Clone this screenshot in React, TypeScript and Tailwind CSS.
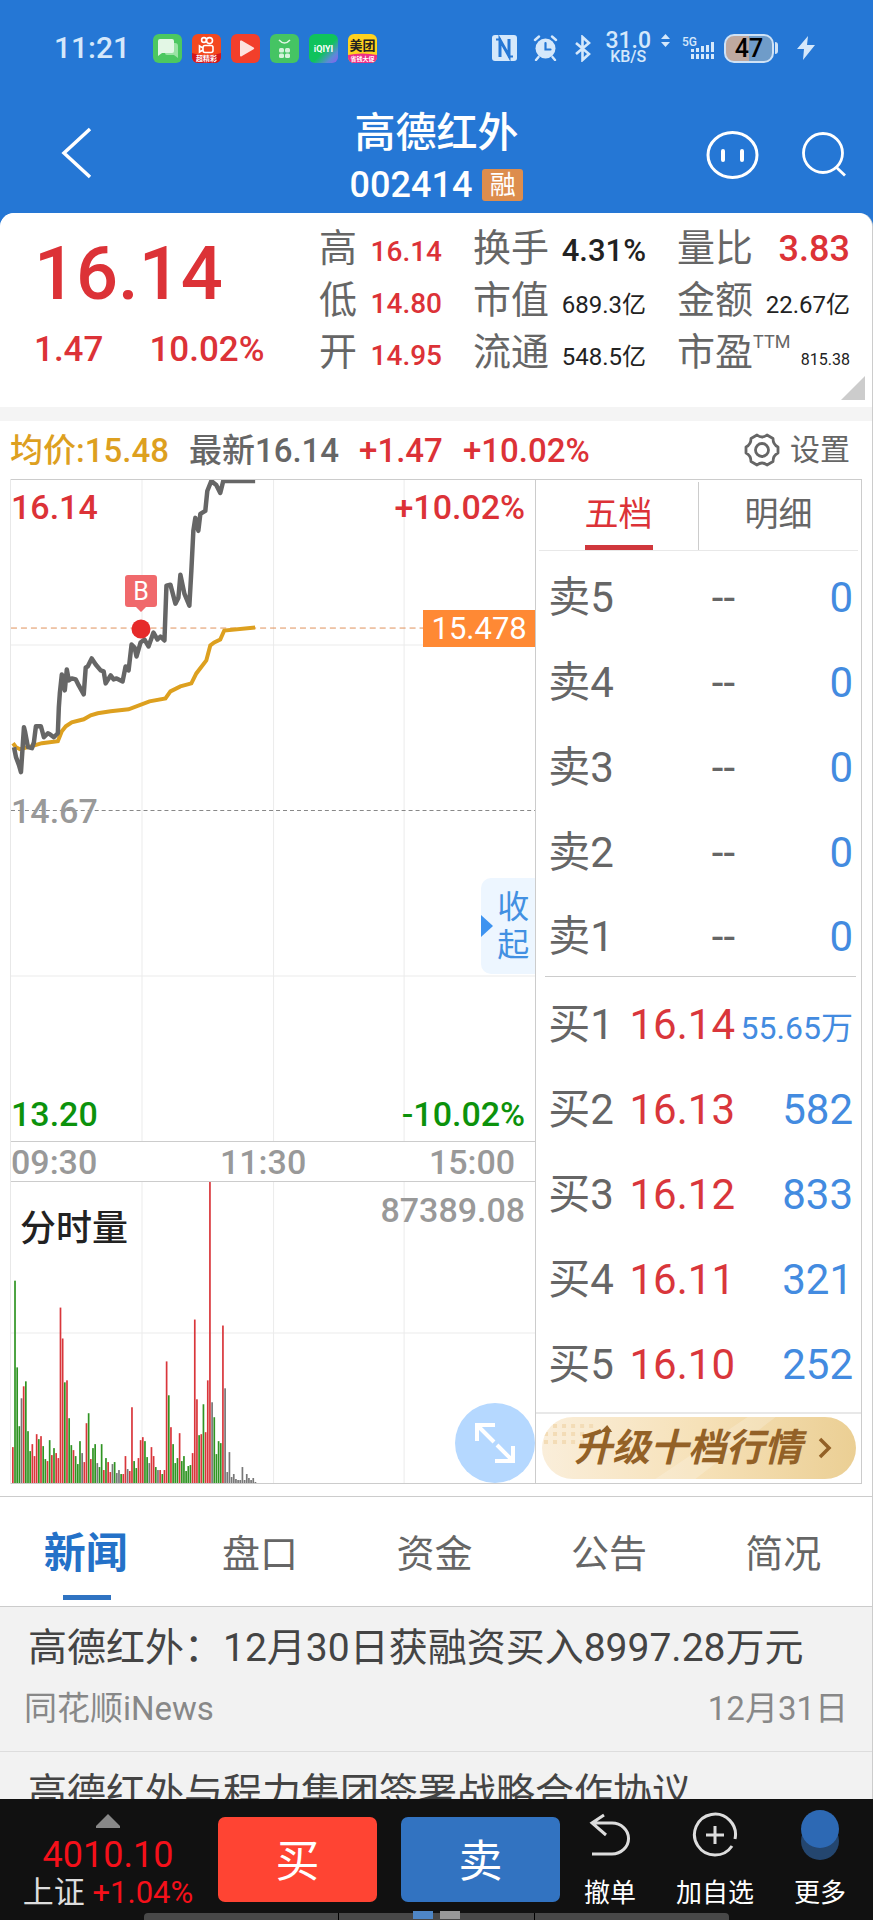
import { useState } from 'react'

type Tone = 'r' | 'g' | 'n'

const CHART_W = 526
const PRICE_H = 663
const VOLUME_H = 302
const MINUTES = 242

const toneFill: Record<Tone, string> = { r: '#d9363b', g: '#2f9422', n: '#777777' }

const pricePoints =
  '3,268 5,278 8,286 10,293 13,248 14,252 17,268 21,269 23,263 25,247 30,247 33,258 37,254 39,255 43,258 47,254 48,228 49,214 51,195 54,211 56,190 58,201 61,199 65,200 68,206 73,215 75,188 77,187 81,179 85,185 90,191 93,192 95,204 100,196 103,200 106,199 112,202 115,187 118,191 121,165 124,168 126,177 130,163 134,160 138,167 143,153 147,160 150,157 154,161 156,106 160,105 165,124 168,118 170,95 174,114 179,126 181,91 183,51 185,38 188,51 190,34 195,31 197,11 201,1 206,5 210,13 213,1 245,1'

const averagePoints =
  '2,264 5,268 9,270 21,267 31,264 47,262 51,252 55,247 61,243 73,240 80,236 87,234 100,232 118,230 139,222 155,219 160,212 170,207 181,204 186,194 196,181 200,166 204,163 210,160 214,151 245,148'

// one entry per minute: tone + height in pixels
const volume =
  'r36 g203 g116 g57 n85 r97 g102 g52 g32 r39 r27 r49 g44 r47 g37 g24 r22 g43 r28 g35 r30 r25 r176 r145 g101 r103 g65 g38 r33 g27 g19 g42 n30 r21 r60 g70 r24 g35 g39 n20 g16 g39 r13 g25 r21 r11 n19 g21 n10 n13 g9 r9 r27 n14 r12 r76 g22 g15 r25 r43 r46 g42 g26 n20 r36 r27 g16 n13 r13 g9 r13 r122 g88 r56 g39 g20 g25 r50 g22 g27 g12 g17 g18 r30 r164 r84 g48 r49 g79 r51 r103 r302 n81 g66 g29 g42 g40 r158 n95 n11 n31 n6 n9 n4 n3 n3 n16 n3 n9 n5 n3 n5 n1'
    .split(' ')
    .map(v => ({ tone: v[0] as Tone, height: Number(v.slice(1)) }))

const stats = [
  { label: '高', value: '16.14', style: 'text-[28px] font-medium text-[#dc3237]' },
  { label: '换手', value: '4.31%', style: 'text-[31px] font-medium text-[#222]' },
  { label: '量比', value: '3.83', style: 'text-[36px] font-medium text-[#dc3237]' },
  { label: '低', value: '14.80', style: 'text-[28px] font-medium text-[#dc3237]' },
  { label: '市值', value: '689.3亿', style: 'text-[24px] text-[#222]' },
  { label: '金额', value: '22.67亿', style: 'text-[24px] text-[#222]' },
  { label: '开', value: '14.95', style: 'text-[28px] font-medium text-[#dc3237]' },
  { label: '流通', value: '548.5亿', style: 'text-[24px] text-[#222]' },
  { label: '市盈', sup: 'TTM', value: '815.38', style: 'text-[16px] text-[#222]' },
]

const sells = ['卖5', '卖4', '卖3', '卖2', '卖1']
const buys = [
  { label: '买1', price: '16.14', qty: '55.65万' },
  { label: '买2', price: '16.13', qty: '582' },
  { label: '买3', price: '16.12', qty: '833' },
  { label: '买4', price: '16.11', qty: '321' },
  { label: '买5', price: '16.10', qty: '252' },
]

const tabs = ['新闻', '盘口', '资金', '公告', '简况']

function AppIcons() {
  return (
    <div className="flex gap-[10px]">
      <svg className="size-[29px]" viewBox="0 0 29 29">
        <rect width="29" height="29" rx="6" fill="#4cc860" />
        <path d="M12 9h10a3 3 0 0 1 3 3v12l-4-3h-7a2 2 0 0 1-2-2z" fill="#9be3a4" />
        <path d="M7 5h12a2 2 0 0 1 2 2v10a2 2 0 0 1-2 2H9l-4 3V7a2 2 0 0 1 2-2z" fill="#e3f7e5" />
      </svg>
      <svg className="size-[29px]" viewBox="0 0 29 29">
        <rect width="29" height="29" rx="6" fill="#f4481e" />
        <path d="M0 19q14 5 29 0v4a6 6 0 0 1-6 6H6a6 6 0 0 1-6-6z" fill="#d4161c" />
        <g fill="none" stroke="#fff" strokeWidth="1.6">
          <circle cx="12" cy="6" r="2.4" />
          <circle cx="17.5" cy="6.6" r="3" />
          <rect x="11" y="11.5" width="10" height="7" rx="2" />
          <path d="M11 14l-3.5-2v6l3.5-2" />
        </g>
        <text x="14.5" y="27" fontSize="7" fontWeight="700" textAnchor="middle" fill="#fff">超精彩</text>
      </svg>
      <svg className="size-[29px]" viewBox="0 0 29 29">
        <rect width="29" height="29" rx="6" fill="#f23f2b" />
        <path d="M9 7.5v14a1 1 0 0 0 1.6.8l12-7a1 1 0 0 0 0-1.7l-12-7A1 1 0 0 0 9 7.5z" fill="#fde3de" />
      </svg>
      <svg className="size-[29px]" viewBox="0 0 29 29">
        <rect width="29" height="29" rx="6" fill="#45c463" />
        <path d="M9 6q5.5 6 11 0" fill="none" stroke="#e1f7e6" strokeWidth="1.5" />
        <g fill="#d4f3db">
          <rect x="9" y="14" width="5" height="4.5" rx="1.5" />
          <rect x="15" y="14" width="5" height="4.5" rx="1.5" />
          <rect x="9" y="19.5" width="5" height="4.5" rx="1.5" />
          <rect x="15" y="19.5" width="5" height="4.5" rx="1.5" />
        </g>
      </svg>
      <svg className="size-[29px]" viewBox="0 0 29 29">
        <defs>
          <linearGradient id="iqiyi" x1="0" y1="0" x2="1" y2="1">
            <stop offset="0.55" stopColor="#0fc35c" />
            <stop offset="0.8" stopColor="#5b8ad8" />
            <stop offset="1" stopColor="#8f5bee" />
          </linearGradient>
        </defs>
        <rect width="29" height="29" rx="6" fill="url(#iqiyi)" />
        <text x="14.5" y="17.5" fontSize="9" fontWeight="700" textAnchor="middle" fill="#fff">iQIYI</text>
      </svg>
      <svg className="size-[29px]" viewBox="0 0 29 29">
        <rect width="29" height="29" rx="6" fill="#ffd21f" />
        <path d="M0 21q14-3 29 0v2a6 6 0 0 1-6 6H6a6 6 0 0 1-6-6z" fill="#ee2f86" />
        <text x="14.5" y="16" fontSize="13" fontWeight="700" textAnchor="middle" fill="#222">美团</text>
        <text x="14.5" y="27" fontSize="6" fontWeight="700" textAnchor="middle" fill="#fff">省钱大促</text>
      </svg>
    </div>
  )
}

function StatusBar() {
  return (
    <div className="flex h-24 items-center justify-between pl-[54px] pr-[58px] text-[#d5e8fb]">
      <div className="flex items-center gap-[23px]">
        <span className="text-[30px] font-medium leading-none">11:21</span>
        <AppIcons />
      </div>
      <div className="flex items-center">
        <svg className="h-[26px] w-[25px]" viewBox="0 0 25 26">
          <rect width="25" height="26" rx="3" fill="currentColor" />
          <path d="M8 22V5l9 16V4" fill="none" stroke="#2577d5" strokeWidth="3" />
          <path d="M4 4.500h5M16 21.500h5" stroke="#2577d5" strokeWidth="2" />
        </svg>
        <svg className="ml-[16px] h-[26px] w-[25px]" viewBox="0 0 25 26" fill="none" stroke="currentColor" strokeLinecap="round">
          <circle cx="12.5" cy="13.5" r="10" fill="currentColor" stroke="none" />
          <path d="M2 5l4-3.5M23 5l-4-3.5M5.500 22L3 25M19.500 22l2.500 3" strokeWidth="2.4" />
          <path d="M12.500 8v6.500h5" stroke="#2577d5" strokeWidth="2.2" />
        </svg>
        <svg className="ml-[16px] h-[27px] w-[18px]" viewBox="0 0 18 27" fill="none" stroke="currentColor" strokeWidth="2.6">
          <path d="M2 8l13 11-6.500 6V2L15 8 2 19" />
        </svg>
        <div className="ml-[13px] flex flex-col items-center font-medium">
          <span className="text-[23px] leading-[18px]">31.0</span>
          <span className="text-[16px] leading-[14px]">KB/S</span>
        </div>
        <svg className="mb-4 ml-[10px] h-[13px] w-[9px]" viewBox="0 0 9 13" fill="currentColor">
          <path d="M4.500 0L9 5H0zM4.500 13L0 8h9z" />
        </svg>
        <svg className="ml-[12px] h-[26px] w-[32px]" viewBox="0 0 32 26" fill="currentColor">
          <text x="0" y="11" fontSize="12" fontWeight="500">5G</text>
          <path d="M9 19h3v5H9zM9 14h3v3H9zM14 19h3v5h-3zM14 13h3v4h-3zM19 19h3v5h-3zM19 11h3v6h-3zM24 19h3v5h-3zM24 10h3v7h-3zM29 19h3v5h-3zM29 7h3v10h-3z" />
        </svg>
        <div className="ml-[10px] flex items-center gap-px">
          <span className="flex h-[29px] w-[50px] items-center justify-center rounded-[10px] border-2 border-[#cfe2f6] bg-linear-to-r from-[#bfa9a0] from-50% to-[#6f9cc9] to-50% text-[25px] font-medium leading-none text-black">
            47
          </span>
          <span className="h-[12px] w-[3px] rounded-r bg-[#cfe2f6]" />
        </div>
        <svg className="ml-[19px] h-[24px] w-[18px]" viewBox="0 0 18 24" fill="currentColor">
          <path d="M11 0L0 13h7L6 24 18 9h-8z" />
        </svg>
      </div>
    </div>
  )
}

function Header() {
  return (
    <header>
      <StatusBar />
      <div className="grid grid-cols-[1fr_auto_1fr] items-start pb-[2px] pt-[11px] text-white">
        <button aria-label="返回" className="ml-[60px] mt-[20px] justify-self-start">
          <svg className="h-[52px] w-[32px]" viewBox="0 0 32 52" fill="none" stroke="currentColor" strokeWidth="3.5">
            <path d="M30 2L4 26l26 24" />
          </svg>
        </button>
        <div className="text-center">
          <h1 className="text-[41px] font-medium leading-[52px]">高德红外</h1>
          <p className="flex items-center justify-center gap-[10px] text-[36px] font-medium leading-[52px]">
            002414
            <span className="flex h-[32px] w-[41px] items-center justify-center rounded-[3px] bg-[#dd8d4d] text-[26px] font-normal leading-none">融</span>
          </p>
        </div>
        <div className="mr-[26px] mt-[24px] flex items-center gap-[42px] justify-self-end">
          <button aria-label="智能助手">
            <svg className="h-[48px] w-[53px]" viewBox="0 0 53 48" fill="none" stroke="currentColor" strokeLinecap="round">
              <ellipse cx="26.5" cy="24" rx="24.500" ry="22.500" strokeWidth="3" />
              <path d="M17 20v9M36 20v9" strokeWidth="4" />
            </svg>
          </button>
          <button aria-label="搜索">
            <svg className="h-[46px] w-[46px]" viewBox="0 0 46 46" fill="none" stroke="currentColor" strokeWidth="2.8">
              <circle cx="22" cy="21" r="19.5" />
              <path d="M35 35l9 8.500" />
            </svg>
          </button>
        </div>
      </div>
    </header>
  )
}

function Quote() {
  return (
    <section className="relative flex justify-between rounded-t-[14px] bg-white pb-[29px] pr-[22px] pt-[9px]">
      <div className="pl-[34px] pt-[15px] font-medium text-[#dc3237]">
        <p className="text-[74px] leading-[74px]">16.14</p>
        <p className="mt-[19px] flex gap-[46px] text-[35px] leading-[40px]">
          <span>1.47</span>
          <span>10.02%</span>
        </p>
      </div>
      <dl className="grid grid-cols-[123px_173px_173px] gap-x-[31px]">
        {stats.map(s => (
          <div key={s.label} className="flex h-[52px] items-baseline justify-between leading-[52px]">
            <dt className="flex items-baseline whitespace-nowrap text-[38px] text-[#666]">
              {s.label}
              {s.sup && <span className="self-start text-[18px] leading-[32px]">{s.sup}</span>}
            </dt>
            <dd className={s.style}>{s.value}</dd>
          </div>
        ))}
      </dl>
      <svg className="absolute bottom-[7px] right-[7px] size-[24px]" viewBox="0 0 24 24">
        <path d="M24 0v24H0z" fill="#ccc" />
      </svg>
    </section>
  )
}

function InfoBar() {
  return (
    <div className="flex h-[58px] items-center justify-between pl-[10px] pr-[22px] text-[33px] leading-none">
      <p className="flex gap-[20px] font-medium">
        <span className="text-[#dda01f]">均价:15.48</span>
        <span className="text-[#666]">最新16.14</span>
        <span className="text-[#dc3237]">+1.47</span>
        <span className="text-[#dc3237]">+10.02%</span>
      </p>
      <button className="flex items-center gap-[10px] text-[30px] text-[#666]">
        <svg className="size-[36px]" viewBox="0 0 36 36" fill="none" stroke="currentColor" strokeWidth="2.8" strokeLinejoin="round">
          <path d="M13 3q5 4 10 0l6 3.500q0 6 5 8.500v6q-5 2.500-5 8.500L23 33q-5-4-10 0l-6-3.500q0-6-5-8.500v-6q5-2.500 5-8.500z" />
          <circle cx="18" cy="18" r="6.5" />
        </svg>
        设置
      </button>
    </div>
  )
}

function Grid({ height, rows }: { height: number; rows: number[] }) {
  return (
    <g stroke="#ebebeb">
      {[131.5, 263.5, 394.5].map(x => <line key={x} x1={x} x2={x} y1="0" y2={height} />)}
      {rows.map(y => <line key={y} x1="0" x2={CHART_W} y1={y} y2={y} />)}
    </g>
  )
}

function PriceChart() {
  return (
    <div className="relative h-[663px] border-y border-[#ccc] text-[34px] font-medium leading-none">
      <svg className="absolute inset-0 size-full" viewBox={`0 0 ${CHART_W} ${PRICE_H}`} preserveAspectRatio="none" fill="none">
        <Grid height={PRICE_H} rows={[165.5, 497.5]} />
        <line x1="0" x2={CHART_W} y1="331.5" y2="331.5" stroke="#888" strokeDasharray="4 3" />
        <line x1="0" x2={CHART_W} y1="148.5" y2="148.5" stroke="#e0915a" strokeDasharray="6 4" />
        <polyline points={averagePoints} stroke="#dda01f" strokeWidth="4" />
        <polyline points={pricePoints} stroke="#666" strokeWidth="4.5" strokeLinejoin="round" />
      </svg>

      <div className="relative flex h-full flex-col justify-between py-[10px] pr-[10px]">
        <p className="flex justify-between text-[#dc3237]"><span>16.14</span><span>+10.02%</span></p>
        <p className="text-[#999]">14.67</p>
        <p className="flex justify-between text-[#0c920c]"><span>13.20</span><span>-10.02%</span></p>
      </div>

      {/* buy marker */}
      <svg className="absolute left-[113px] top-[93px] h-[66px] w-[34px]" viewBox="0 0 34 66">
        <path d="M4 2h26a3 3 0 0 1 3 3v26a3 3 0 0 1-3 3h-8l-5 5-5-5H4a3 3 0 0 1-3-3V5a3 3 0 0 1 3-3z" fill="#f0696c" />
        <text x="17" y="27" fontSize="25" fontWeight="400" textAnchor="middle" fill="#fff">B</text>
        <circle cx="17" cy="56" r="9.5" fill="#e62a2a" />
      </svg>

      <span className="absolute right-0 top-[130px] flex h-[37px] w-[112px] items-center justify-center bg-[#ff8934] text-[31px] font-normal text-white">
        15.478
      </span>

      <button className="absolute right-0 top-[398px] flex h-[96px] w-[54px] items-center rounded-l-[10px] bg-[#edf6ff] text-[32px] font-normal leading-[38px] text-[#4290e2]">
        <svg className="h-[24px] w-[12px]" viewBox="0 0 12 24"><path d="M0 1l12 11L0 23z" fill="#3d93f0" /></svg>
        <span className="w-[42px] pr-[2px]">收起</span>
      </button>
    </div>
  )
}

function VolumeChart() {
  const step = CHART_W / MINUTES
  return (
    <div className="relative h-[303px] border-y border-[#ccc] leading-none">
      <svg className="absolute inset-0 size-full" viewBox={`0 0 ${CHART_W} ${VOLUME_H}`} preserveAspectRatio="none">
        <Grid height={VOLUME_H} rows={[151.5]} />
        {volume.map((v, i) => (
          <rect key={i} x={1 + i * step} y={VOLUME_H - v.height} width="1.7" height={v.height} fill={toneFill[v.tone]} />
        ))}
      </svg>
      <div className="relative flex justify-between pl-[9px] pr-[10px] pt-[11px]">
        <h2 className="pt-[18px] text-[36px] font-medium text-[#222]">分时量</h2>
        <span className="text-[34px] font-medium text-[#999]">87389.08</span>
      </div>
      <button aria-label="全屏" className="absolute bottom-0 right-0 flex size-[80px] items-center justify-center rounded-full bg-[#b5d8ff]">
        <svg className="size-[42px]" viewBox="0 0 42 42" fill="none" stroke="#fff" strokeWidth="4">
          <path d="M3 19V3h18M4 4l16 16M39 24v15H21M38 38L23 23" />
        </svg>
      </button>
    </div>
  )
}

function OrderBook() {
  const [tab, setTab] = useState('五档')
  return (
    <div className="flex flex-[326] flex-col border border-[#ccc]">
      <div className="mx-[3px] flex h-[71px] items-end border-b border-[#e8e8e8] text-[34px] leading-none">
        {['五档', '明细'].map(t => (
          <button
            key={t}
            onClick={() => setTab(t)}
            className={`flex h-[68px] flex-1 items-stretch justify-center first:border-r first:border-[#ccc] ${tab === t ? 'text-[#dc3237]' : 'text-[#666]'}`}
          >
            <span className={`flex items-center border-b-[5px] ${tab === t ? 'border-[#d0373c]' : 'border-transparent'}`}>{t}</span>
          </button>
        ))}
      </div>
      <table className="ml-[9px] mr-[5px] text-[42px] leading-none">
        <tbody>
          {sells.map(label => (
            <tr key={label} className="h-[85px]">
              <th className="w-[72px] whitespace-nowrap pl-[3px] pt-[8px] text-left font-normal text-[#666]">{label}</th>
              <td className="pt-[8px] text-right text-[#666]">--</td>
              <td className="w-[121px] pr-[3px] pt-[8px] text-right text-[#438be0]">0</td>
            </tr>
          ))}
        </tbody>
        <tbody className="border-t border-[#ccc]">
          {buys.map(b => (
            <tr key={b.label} className="h-[85px]">
              <th className="whitespace-nowrap pl-[3px] pt-[12px] text-left font-normal text-[#666]">{b.label}</th>
              <td className="pt-[12px] text-right text-[#d9363b]">{b.price}</td>
              <td className={`whitespace-nowrap pr-[3px] text-right text-[#438be0] ${b.qty.endsWith('万') ? 'pt-[18px] text-[32px]' : 'pt-[12px]'}`}>{b.qty}</td>
            </tr>
          ))}
        </tbody>
      </table>
      <div className="mt-auto border-t-2 border-[#e8e8e8] pb-[4px] pl-[6px] pr-[5px] pt-[3px]">
        <button className="relative flex h-[62px] w-full items-center justify-center gap-[16px] overflow-hidden rounded-full bg-linear-to-r from-[#faeeda] via-[#f6e1b8] to-[#ebcf94] pl-[8px] text-[38px] font-bold italic leading-none text-[#936127]">
          <svg className="absolute inset-0 size-full" viewBox="0 0 313 62" preserveAspectRatio="none">
            <path d="M2 9h52M2 17h48M2 25h42" stroke="#f3dcb6" strokeWidth="4" strokeDasharray="4 5" />
            <path d="M205 0h28l-80 62h-40z" fill="#fff" opacity="0.2" />
            <path d="M58 15l7-7 5 7z" fill="#936127" />
          </svg>
          <span className="relative">升级十档行情</span>
          <svg className="relative h-[22px] w-[14px]" viewBox="0 0 14 22" fill="none" stroke="currentColor" strokeWidth="3.5">
            <path d="M2 2l9 9-9 9" />
          </svg>
        </button>
      </div>
    </div>
  )
}

function News() {
  const [active, setActive] = useState(tabs[0])
  return (
    <section className="mt-[12px] border-t border-[#ccc]">
      <nav className="grid h-[110px] grid-cols-5 border-b border-[#ccc]">
        {tabs.map(t => (
          <button
            key={t}
            onClick={() => setActive(t)}
            className={`flex flex-col items-center justify-between pb-[6px] ${active === t ? 'text-[42px] font-bold text-[#2471c8]' : 'text-[38px] text-[#666]'}`}
          >
            <span className="pr-[3px] pt-[29px] leading-[56px]">{t}</span>
            {active === t && <span className="h-[5px] w-[48px] bg-[#2f73c2]" />}
          </button>
        ))}
      </nav>
      <ul className="bg-[#f2f2f2]">
        <li className="border-b border-[#ddd] pb-[19px] pt-[13px]">
          <a href="#news-1" className="block whitespace-nowrap px-[28px] text-[39px] leading-[56px] text-[#444]">
            高德红外：12月30日获融资买入8997.28万元
          </a>
          <p className="flex justify-between px-[24px] pt-[10px] text-[33px] leading-[46px] text-[#888]">
            <span>同花顺iNews</span>
            <time>12月31日</time>
          </p>
        </li>
        <li className="pt-[13px]">
          <a href="#news-2" className="block whitespace-nowrap px-[28px] text-[39px] leading-[56px] text-[#444]">
            高德红外与程力集团签署战略合作协议
          </a>
        </li>
      </ul>
    </section>
  )
}

function TradeBar() {
  return (
    <footer className="relative flex h-[121px] shrink-0 items-start gap-[24px] bg-[#111] pl-[22px] pr-[27px] pt-[11px] leading-none text-white">
      <div className="flex w-[172px] shrink-0 flex-col items-center text-[#f5101a]">
        <svg className="mt-[4px] h-[14px] w-[24px]" viewBox="0 0 24 14"><path d="M12 0l12 12v2H0v-2z" fill="#888" /></svg>
        <span className="mt-[7px] text-[36px] leading-[40px]">4010.10</span>
        <span className="whitespace-nowrap text-[31px] leading-[36px]"><span className="text-[#ddd]">上证</span> +1.04%</span>
      </div>
      <button className="mt-[7px] h-[85px] flex-1 rounded-[7px] bg-[#ff4433] pt-1 text-[44px]">买</button>
      <button className="mt-[7px] h-[85px] flex-1 rounded-[7px] bg-[#3273c1] pt-1 text-[44px]">卖</button>
      <div className="flex shrink-0 gap-[40px] text-[26px]">
        <button className="flex flex-col items-center gap-[18px]">
          <svg className="h-[52px] w-[44px]" viewBox="0 0 44 52" fill="none" stroke="#ddd" strokeWidth="3">
            <path d="M16 5L4 13l14 12M4 13h20a16 15 0 0 1 0 31H4" />
          </svg>
          撤单
        </button>
        <button className="flex flex-col items-center gap-[18px]">
          <svg className="h-[52px] w-[46px]" viewBox="0 0 46 52" fill="none" stroke="#ddd" strokeWidth="3">
            <path d="M40 36A20.500 20.500 0 1 1 43 29M23 16v18M14 25h18" />
          </svg>
          加自选
        </button>
        <button className="flex flex-col items-center gap-[18px]">
          <svg className="h-[52px] w-[40px]" viewBox="0 0 40 52">
            <circle cx="20" cy="31" r="19" fill="#24466f" />
            <circle cx="20" cy="19" r="19" fill="#2d69b4" />
          </svg>
          更多
        </button>
      </div>
      <div className="absolute inset-x-[144px] bottom-0 flex h-[7px] divide-x divide-black rounded-t bg-[#484848]">
        <span className="flex-1" />
        <span className="flex flex-1 items-end justify-center gap-[7px] pb-px">
          <span className="h-[8px] w-[20px] bg-[#4e86c6]" />
          <span className="h-[8px] w-[20px] bg-[#999]" />
        </span>
        <span className="flex-1" />
      </div>
    </footer>
  )
}

export default function App() {
  return (
    <div className="flex h-screen flex-col overflow-hidden bg-[#2577d5] font-[family-name:Roboto,'Noto_Sans_CJK_SC',sans-serif]">
      <Header />
      <main className="flex-1 overflow-hidden rounded-t-[14px] border-r border-[#ccc] bg-white">
        <Quote />
        <div className="h-[14px] bg-[#f4f4f4]" />
        <InfoBar />
        <div className="mx-[10px] flex">
          <div className="flex-[526] border-l border-[#e8e8e8]">
            <PriceChart />
            <p className="flex h-[39px] items-center justify-between pr-[20px] text-[34px] font-medium leading-none text-[#999]">
              <span>09:30</span>
              <span>11:30</span>
              <span>15:00</span>
            </p>
            <VolumeChart />
          </div>
          <OrderBook />
        </div>
        <News />
      </main>
      <TradeBar />
    </div>
  )
}
